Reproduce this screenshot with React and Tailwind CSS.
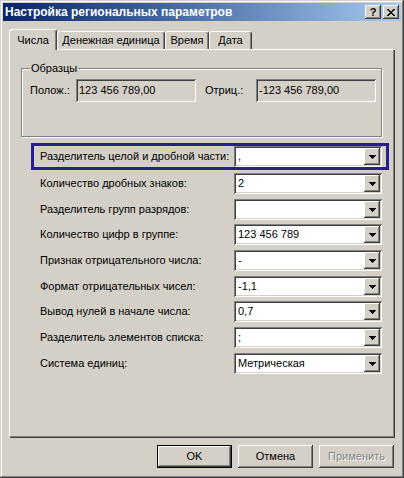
import React from "react";

// классические 3D-рамки Windows 2000
const raised =
  "shadow-[inset_-1px_-1px_#404040,inset_1px_1px_#ffffff,inset_-2px_-2px_#808080,inset_2px_2px_#d4d0c8]";
const sunken =
  "shadow-[inset_1px_1px_#808080,inset_-1px_-1px_#ffffff,inset_2px_2px_#404040,inset_-2px_-2px_#d4d0c8]";

const ROWS = [
  { label: "Количество дробных знаков:", value: "2", mt: "mt-[3px]" },
  { label: "Разделитель групп разрядов:", value: "", mt: "mt-[5px]" },
  { label: "Количество цифр в группе:", value: "123 456 789", mt: "mt-[4px]" },
  { label: "Признак отрицательного числа:", value: "-", mt: "mt-[5px]" },
  { label: "Формат отрицательных чисел:", value: "-1,1", mt: "mt-[5px]" },
  { label: "Вывод нулей в начале числа:", value: "0,7", mt: "mt-[4px]" },
  { label: "Разделитель элементов списка:", value: ";", mt: "mt-[5px]" },
  { label: "Система единиц:", value: "Метрическая", mt: "mt-[5px]" },
];

function Arrow() {
  return (
    <svg width="7" height="4" viewBox="0 0 7 4" shapeRendering="crispEdges">
      <rect x="0" y="0" width="7" height="1" fill="#000" />
      <rect x="1" y="1" width="5" height="1" fill="#000" />
      <rect x="2" y="2" width="3" height="1" fill="#000" />
      <rect x="3" y="3" width="1" height="1" fill="#000" />
    </svg>
  );
}

function Combo({ value }) {
  return (
    <div className={`w-[148px] h-[21px] bg-white ${sunken} flex items-center justify-between pl-[4px] pr-[2px]`}>
      <span className="leading-none">{value}</span>
      <div className={`w-[16px] h-[17px] bg-[#d4d0c8] ${raised} flex items-center justify-center`}>
        <Arrow />
      </div>
    </div>
  );
}

function Tab({ label, active, w }) {
  return (
    <div
      className={`${w} ${
        active ? "h-[21px] -mb-px relative z-10" : "h-[18px]"
      } bg-[#d4d0c8] border-l border-t border-white border-r border-r-[#404040] rounded-t-[3px] shadow-[inset_-1px_0_#808080] flex items-center justify-center`}
    >
      {label}
    </div>
  );
}

function Button({ children, isDefault, disabled }) {
  return (
    <div
      className={`w-[75px] h-[23px] bg-[#d4d0c8] flex items-center justify-center ${
        isDefault ? "border border-black" : ""
      }`}
    >
      <div className={`w-full h-full ${raised} flex items-center justify-center`}>
        <span
          className={
            disabled ? "text-[#808080] [text-shadow:1px_1px_0_#ffffff]" : "text-black"
          }
        >
          {children}
        </span>
      </div>
    </div>
  );
}

export default function App() {
  return (
    <div className="w-[404px] h-[478px] bg-[#d4d0c8] shadow-[inset_-1px_-1px_#404040,inset_1px_1px_#d4d0c8,inset_-2px_-2px_#808080,inset_2px_2px_#ffffff] p-[3px] flex flex-col font-['Liberation_Sans',Arial,sans-serif] text-[11px] text-black">
      {/* Заголовок окна */}
      <div className="h-[18px] bg-linear-to-r from-[#0a246a] to-[#a6caf0] flex items-center pl-[2px] pr-[2px]">
        <span className="text-white font-bold text-[12px] flex-1">
          Настройка региональных параметров
        </span>
        <div className={`w-[16px] h-[14px] bg-[#d4d0c8] ${raised} flex items-center justify-center font-bold text-[11px] leading-none`}>
          ?
        </div>
        <div className={`w-[16px] h-[14px] ml-[2px] bg-[#d4d0c8] ${raised} flex items-center justify-center`}>
          <svg width="8" height="7" viewBox="0 0 8 7" shapeRendering="crispEdges">
            <path
              d="M0 0h2v1h1v1h2V1h1V0h2v1H7v1H6v1H5v1h1v1h1v1h1v1H6V6H5V5H3v1H2v1H0V6h1V5h1V4h1V3H2V2H1V1H0z"
              fill="#000"
            />
          </svg>
        </div>
      </div>

      <div className="flex-1 flex flex-col px-[6px] pt-[8px]">
        {/* Вкладки */}
        <div className="h-[20px] flex items-end">
          <Tab label="Числа" active w="w-[48px]" />
          <Tab label="Денежная единица" w="w-[108px]" />
          <Tab label="Время" w="w-[44px]" />
          <Tab label="Дата" w="w-[43px]" />
        </div>

        {/* Страница */}
        <div className="h-[389px] shadow-[inset_1px_1px_#ffffff,inset_-1px_-1px_#404040,inset_-2px_-2px_#808080] pt-[19px] pl-[12px] flex flex-col">
          <div className="relative w-[361px] h-[69px] border border-[#808080] shadow-[inset_1px_1px_#ffffff,1px_1px_0_#ffffff] pt-[10px] pl-[8px]">
            <span className="absolute -top-[7px] left-[8px] px-[1px] bg-[#d4d0c8] leading-[13px]">
              Образцы
            </span>
            <div className="flex items-center">
              <span className="w-[46px]">Полож.:</span>
              <div className={`w-[120px] h-[23px] ${sunken} flex items-center pl-[3px]`}>
                123 456 789,00
              </div>
              <span className="w-[51px] ml-[9px]">Отриц.:</span>
              <div className={`w-[120px] h-[23px] ${sunken} flex items-center pl-[3px]`}>
                -123 456 789,00
              </div>
            </div>
          </div>

          <div className="ml-[10px] mt-[6px] w-[358px] flex flex-col">
            <div className="h-[27px] border-[3px] border-[#25208c] pl-[6px] pr-[4px] flex items-center justify-between">
              <span>Разделитель целой и дробной части:</span>
              <Combo value="," />
            </div>
            {ROWS.map((r) => (
              <div key={r.label} className={`${r.mt} h-[21px] pl-[9px] pr-[7px] flex items-center justify-between`}>
                <span>{r.label}</span>
                <Combo value={r.value} />
              </div>
            ))}
          </div>
        </div>

        {/* Кнопки */}
        <div className="mt-[7px] flex justify-end gap-[6px] pr-[1px]">
          <Button isDefault>OK</Button>
          <Button>Отмена</Button>
          <Button disabled>Применить</Button>
        </div>
      </div>
    </div>
  );
}
